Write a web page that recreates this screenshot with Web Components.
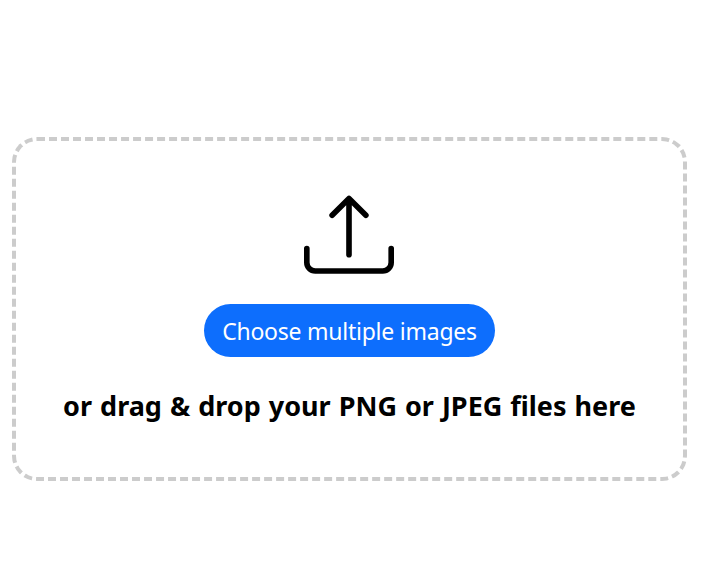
<!DOCTYPE html>
<html lang="en"><head><meta charset="utf-8"><title>Upload images</title>
<style>html,body{margin:0;height:100%;background:#fff}body{font-family:"Noto Sans","Open Sans",sans-serif;color:#000}</style></head><body>
<drop-zone><upload-icon slot="icon"></upload-icon><pick-button slot="action">Choose multiple images</pick-button>or drag &amp; drop your PNG or JPEG files here</drop-zone>
<script>
class UploadIcon extends HTMLElement{constructor(){super();this.attachShadow({mode:'open'}).innerHTML=`
<style>:host{display:block;width:90px;height:90px;margin-right:1px}svg{display:block}</style>
<svg width="90" height="90" viewBox="0 0 16 16" fill="currentColor"><path d="M.5 9.9a.5.5 0 0 1 .5.5v2.5a1 1 0 0 0 1 1h12a1 1 0 0 0 1-1v-2.5a.5.5 0 0 1 1 0v2.5a2 2 0 0 1-2 2H2a2 2 0 0 1-2-2v-2.5a.5.5 0 0 1 .5-.5z"/><path d="M7.646 1.146a.5.5 0 0 1 .708 0l3 3a.5.5 0 0 1-.708.708L8.5 2.707V11.5a.5.5 0 0 1-1 0V2.707L5.354 4.854a.5.5 0 1 1-.708-.708l3-3z"/></svg>`}}
class PickButton extends HTMLElement{constructor(){super();this.attachShadow({mode:'open'}).innerHTML=`
<style>:host{display:block}button{display:block;width:291px;height:53px;padding:1px 0 0;border:0;border-radius:27px;background:#0d6efd;color:#fff;font:23px/52px "Noto Sans","Open Sans",sans-serif;letter-spacing:-.24px;white-space:nowrap}</style>
<button type="button"><slot></slot></button>`}}
class DropZone extends HTMLElement{constructor(){super();this.attachShadow({mode:'open'}).innerHTML=`
<style>:host{display:block;padding:137px 15px 0 12px}
section{box-sizing:border-box;height:344px;border:4px dashed #ccc;border-radius:25px;display:flex;flex-direction:column;align-items:center;padding-top:49px}
.action{margin-top:24px}
p{margin:30px 0 0;font-size:27px;font-weight:700;line-height:38px;word-spacing:1px;white-space:nowrap}</style>
<section><slot name="icon"></slot><div class="action"><slot name="action"></slot></div><p><slot></slot></p></section>`}}
customElements.define('upload-icon',UploadIcon);customElements.define('pick-button',PickButton);customElements.define('drop-zone',DropZone);
</script></body></html>
